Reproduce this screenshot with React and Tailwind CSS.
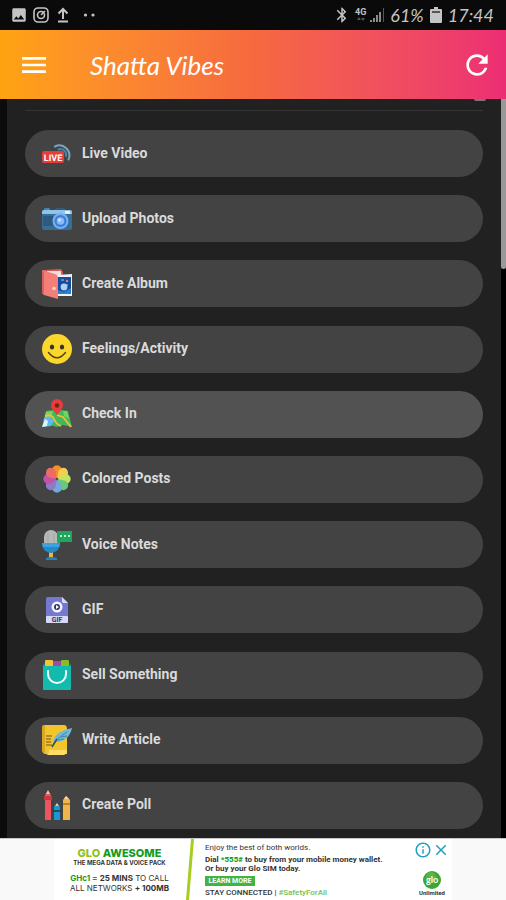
import { MdMenu, MdRefresh, MdImage, MdBluetooth, MdClose, MdInfoOutline } from "react-icons/md";

const LiveIcon = () => (
  <svg viewBox="0 0 30 30" className="size-[30px]" aria-hidden="true">
    <g fill="none" strokeLinecap="round">
      <path d="M13 7.500A10 10 0 0 1 26.500 20.500" stroke="#7ba3ba" strokeWidth="2" />
      <path d="M16.500 10.500A5.500 5.500 0 0 1 24 17" stroke="#3f86b0" strokeWidth="2" />
      <circle cx="19.500" cy="13.500" r="1.500" fill="#4aa6dc" />
    </g>
    <rect x="0" y="12" width="22" height="12" rx="2" fill="#e53f3b" />
    <text x="11" y="21.500" textAnchor="middle" textRendering="geometricPrecision" fontSize="9" fontWeight="700" fontFamily="'Roboto', sans-serif" fill="#fff">LIVE</text>
  </svg>
);

const CameraIcon = () => (
  <svg viewBox="0 0 30 30" className="size-[30px]" aria-hidden="true">
    <path d="M11 7l3-3h8l3 3z" fill="#355b78" />
    <rect x="2" y="4" width="6" height="3" rx="1" fill="#4383ad" />
    <rect x="0" y="6" width="30" height="20" rx="2" fill="#356e96" />
    <path d="M2 6h26a2 2 0 0 1 2 2v2H0V8a2 2 0 0 1 2-2z" fill="#8fc3e8" />
    <rect x="1" y="12" width="10" height="10" fill="#2e5b7d" />
    <rect x="23" y="7" width="5" height="3" fill="#e2f0fa" />
    <circle cx="18.500" cy="17" r="8" fill="#78b1f5" />
    <circle cx="18.500" cy="17" r="6" fill="#3d7fd2" />
    <circle cx="18.500" cy="17" r="3.800" fill="#87b9ff" />
    <circle cx="17.500" cy="16" r="1.500" fill="#d5e7ff" />
  </svg>
);

const AlbumIcon = () => (
  <svg viewBox="0 0 30 30" className="size-[30px]" aria-hidden="true">
    <path d="M1 1l18-1 2 3v23H4z" fill="#d65a55" />
    <path d="M5 2h14v22H5z" fill="#f3dddd" />
    <path d="M15 6l15-1v22H15z" fill="#eef3f7" />
    <path d="M16 8h13v17H16z" fill="#174c9d" />
    <circle cx="22" cy="18" r="3.400" fill="#a7d4f4" />
    <path d="M16 21l6 2 7-4v6H16z" fill="#2e7fd0" />
    <circle cx="25" cy="12" r="1.200" fill="#ee7770" />
    <path d="M19 11h3M24 16h2" stroke="#8ec8ff" strokeWidth="1" />
    <path d="M0 1l13 4q3 1 3 4v21L2 26q-2-1-2-3z" fill="#f27f78" />
    <path d="M0 1l2 2v23q-2-1-2-3z" fill="#d9605c" />
    <circle cx="12" cy="19.500" r="1.800" fill="#f7d5d2" />
  </svg>
);

const SmileIcon = () => (
  <svg viewBox="0 0 30 30" className="size-[30px]" aria-hidden="true">
    <circle cx="15" cy="15" r="15" fill="#fbd72c" />
    <ellipse cx="10" cy="13" rx="2.200" ry="2.600" fill="#3a3529" />
    <ellipse cx="20" cy="13" rx="2.200" ry="2.600" fill="#3a3529" />
    <path d="M6.500 18.500q8.500 10.500 17 0" fill="none" stroke="#4a3f22" strokeWidth="1.400" strokeLinecap="round" />
  </svg>
);

const MapIcon = () => (
  <svg viewBox="0 0 30 30" className="size-[30px]" aria-hidden="true">
    <path d="M4 12l7-1 4 2 4-2 7 1 4 16-9-2-6 2-7-2-8 2z" fill="#43b85a" />
    <path d="M4 13l7-1-2 7-7 3z" fill="#82d35c" />
    <path d="M2 19l6-2 4 5-3 5-8 1z" fill="#5eb9ed" />
    <path d="M0 28l3-8 3 2-1 5z" fill="#dff2fb" />
    <path d="M3 17q7-2 9 3t7 7M15 16l6 2 8 10" fill="none" stroke="#f2bd42" strokeWidth="1.800" />
    <path d="M21 12h4l2 8-5-3z" fill="#70d65c" />
    <path d="M15 16C11 11 9 9 9 6a6 6 0 0 1 12 0c0 3-2 5-6 10z" fill="#e83c3a" />
    <circle cx="15" cy="6.500" r="2.200" fill="#702322" />
  </svg>
);

const petals = ["#f39220", "#f7cc52", "#c5e35d", "#6bc77e", "#72a9dc", "#8f79c8", "#c252a5", "#ee6b65"];
const FlowerIcon = () => (
  <svg viewBox="0 0 30 30" className="size-[30px]" aria-hidden="true">
    {petals.map((color, i) => (
      <path key={color} d="M15 15L10.300 8A5 5 0 1 1 19.700 8z" fill={color} transform={`rotate(${i * 45} 15 15)`} />
    ))}
    <circle cx="15" cy="15" r="1.300" fill="#5d4a3d" />
  </svg>
);

const MicIcon = () => (
  <svg viewBox="0 0 30 30" className="size-[30px]" aria-hidden="true">
    <path d="M7 22h4v6H7z" fill="#e5b73f" />
    <path d="M4 28q5-2 11 0v2H4z" fill="#2383ba" />
    <path d="M0 13h18v1a9 9 0 0 1-18 0z" fill="#2588c8" />
    <path d="M2 14V7a7 7 0 0 1 14 0v7z" fill="#b5b9b8" />
    <path d="M6 3v11M12 3v11" stroke="#a0a6a5" strokeWidth="1" />
    <path d="M0 13h18l-1 4H1z" fill="#3ba1df" />
    <path d="M16 1h14v11H19l-3 2-1-2V2z" fill="#20a65c" />
    <path d="M18 6h2m2 0h2m2 0h2" stroke="#fff" strokeWidth="1.600" />
  </svg>
);

const GifIcon = () => (
  <svg viewBox="0 0 30 30" className="size-[30px]" aria-hidden="true">
    <path d="M6 2h14l6 6v20H6a2 2 0 0 1-2-2V4a2 2 0 0 1 2-2z" fill="#7578d0" />
    <path d="M20 2l6 6h-5l-1-1z" fill="#d9d9fa" />
    <circle cx="15" cy="12" r="5.500" fill="#f5f5ff" />
    <circle cx="15" cy="12" r="3" fill="#323478" />
    <path d="M14 10l3 2-3 2z" fill="#fff" />
    <rect x="4" y="21" width="22" height="7" rx="1" fill="#d9d9f7" />
    <text x="15" y="27" textAnchor="middle" textRendering="geometricPrecision" fontSize="7" fontWeight="700" fontFamily="'Roboto', sans-serif" fill="#33354f">GIF</text>
  </svg>
);

const BagIcon = () => (
  <svg viewBox="0 0 30 30" className="size-[30px]" aria-hidden="true">
    <path d="M1 5l3-3h22l3 3z" fill="#16897f" />
    <rect x="3" y="0" width="8" height="8" rx="1" fill="#f2c43e" />
    <rect x="11" y="1" width="8" height="7" fill="#a346b0" />
    <rect x="19" y="0" width="8" height="8" rx="1" fill="#85bd22" />
    <path d="M1 5l2 1h24l2-1v24q0 1-1 1H2q-1 0-1-1z" fill="#13bbae" />
    <path d="M6 11v3a9 9 0 0 0 18 0v-3" fill="none" stroke="#f0fffc" strokeWidth="2" strokeLinecap="round" />
  </svg>
);

const ScrollIcon = () => (
  <svg viewBox="0 0 30 30" className="size-[30px]" aria-hidden="true">
    <path d="M3 0h19q3 0 3 4v25H4q-4 0-4-5V3q0-3 3-3z" fill="#f2c52d" />
    <path d="M0 3q0-3 3-3v28q-3-1-3-4z" fill="#dba620" />
    <path d="M7 25h18q0 4-3 5H4q4-1 3-5z" fill="#ffdc68" />
    <path d="M4 11h6M4 14h5M4 17h5M4 20h6" stroke="#6b5520" strokeWidth="1.200" />
    <path d="M11 20C11 11 16 6 30 3c-2 9-8 14-16 14z" fill="#6fb8da" />
    <path d="M14 15L25 7M16 15l6-1M19 12l6-1" fill="none" stroke="#387b9e" strokeWidth="0.800" />
    <path d="M10 22l5-8" stroke="#344e5a" strokeWidth="1.500" />
  </svg>
);

const PollIcon = () => (
  <svg viewBox="0 0 30 30" className="size-[30px]" aria-hidden="true">
    <path d="M3 5l3-4 3 4v25H3z" fill="#ec5560" />
    <path d="M4 4l2-4 2 4z" fill="#f3c4a4" />
    <path d="M2 6h8v4H2z" fill="#c73843" />
    <path d="M12 17l3-4 3 4v13h-6z" fill="#1698d2" />
    <path d="M13 16l2-3 2 3z" fill="#f1c39e" />
    <path d="M11 21h8" stroke="#333" strokeWidth="1.500" />
    <path d="M21 10l3-4 4 4v20h-7z" fill="#efb64b" />
    <path d="M22 9l2-3 3 3z" fill="#f5d3ad" />
    <path d="M21 14h7" stroke="#a4702c" strokeWidth="1.500" />
  </svg>
);

const actions = [
  ["Live Video", LiveIcon],
  ["Upload Photos", CameraIcon],
  ["Create Album", AlbumIcon],
  ["Feelings/Activity", SmileIcon],
  ["Check In", MapIcon],
  ["Colored Posts", FlowerIcon],
  ["Voice Notes", MicIcon],
  ["GIF", GifIcon],
  ["Sell Something", BagIcon],
  ["Write Article", ScrollIcon],
  ["Create Poll", PollIcon],
];

function StatusBar() {
  return (
    <div className="flex h-[30px] shrink-0 items-center justify-between bg-[#0a0a0a] pr-3 pl-2.5 text-[#c4c4c4]">
      <div className="flex items-center gap-1">
        <MdImage className="size-[18px]" />
        <svg viewBox="0 0 18 18" className="size-[18px]" fill="none" stroke="currentColor" strokeWidth="1.600">
          <rect x="2" y="2" width="14" height="14" rx="4" />
          <circle cx="9" cy="9" r="3.500" />
          <path d="M9 9l4-4" />
        </svg>
        <svg viewBox="0 0 18 18" className="size-[18px]" fill="none" stroke="currentColor" strokeWidth="2">
          <path d="M9 13V3M4.500 7.500L9 3l4.500 4.500M4 15.500h10" />
        </svg>
        <svg viewBox="0 0 24 18" className="h-[18px] w-6" fill="currentColor">
          <circle cx="9.500" cy="9" r="1.600" />
          <circle cx="17" cy="9" r="1.600" />
        </svg>
      </div>
      <div className="flex items-center">
        <MdBluetooth className="mr-1 size-[18px]" />
        <div className="flex flex-col items-center">
          <span className="font-['Roboto',sans-serif] text-[9px] leading-[9px] font-bold">4G</span>
          <svg viewBox="0 0 10 5" className="h-[5px] w-2.5 fill-[#555]"><path d="M1 3l2-3 2 3zM5 1h4L7 4z" /></svg>
        </div>
        <svg viewBox="0 0 16 16" className="ml-1 size-4" fill="#8b8b8b">
          <path d="M0 13h2v2H0zM3 11h2v4H3zM6 8h2v7H6zM9 5h2v10H9z" />
          <path d="M13 1h1v14h-1z" fill="#555" />
        </svg>
        <span className="ml-1 font-['Lato',sans-serif] text-[18px] leading-5 italic">61%</span>
        <svg viewBox="0 0 12 16" className="mx-1.5 h-4 w-3" fill="currentColor">
          <path d="M4 0h4v2h3q1 0 1 1v12q0 1-1 1H1q-1 0-1-1V3q0-1 1-1h3z" />
          <path d="M2 4h8v2H2z" fill="#555" />
        </svg>
        <span className="font-['Lato',sans-serif] text-[18px] leading-5 italic">17:44</span>
      </div>
    </div>
  );
}

function AdBanner() {
  return (
    <aside className="flex h-[62px] shrink-0 justify-center border-t border-[#c9c9c9] bg-[#f9f9f9] font-['Roboto',sans-serif] text-[#333]">
      <div className="flex w-[398px] bg-white">
        <div className="flex w-[131px] flex-col items-center pt-2 font-['Inter',sans-serif] whitespace-nowrap">
          <p className="text-[11px] leading-3 font-extrabold text-[#159a22]"><span className="text-[#8fc31c]">GLO</span> AWESOME</p>
          <p className="text-[6px] leading-[8px] font-bold">THE MEGA DATA &amp; VOICE PACK</p>
          <p className="mt-1.5 text-[8px] leading-[10px]"><b className="text-[#159a22]">GHc1 =</b> <b>25 MINS</b> TO CALL</p>
          <p className="text-[8px] leading-[10px]">ALL NETWORKS <b>+ 100MB</b></p>
        </div>
        <svg viewBox="0 0 10 61" preserveAspectRatio="none" className="h-full w-2.5"><path d="M6 0h3L4 61H1z" fill="#a8cc20" /></svg>
        <div className="flex flex-1 flex-col items-start pt-1 pl-2.5 whitespace-nowrap">
          <p className="text-[8px] leading-[10px]">Enjoy the best of both worlds.</p>
          <p className="mt-0.5 text-[8px] leading-[9px] font-bold">Dial <b className="text-[#20a52a]">*555#</b> to buy from your mobile money wallet.</p>
          <p className="text-[8px] leading-[10px] font-bold">Or buy your Glo SIM today.</p>
          <button className="mt-0.5 h-2.5 w-[50px] bg-[#43b342] text-[7px] leading-[10px] font-bold text-white">LEARN MORE</button>
          <p className="mt-0.5 text-[8px] leading-[10px] font-medium">STAY CONNECTED | <span className="text-[#72be50]">#SafetyForAll</span></p>
        </div>
        <div className="flex w-10 flex-col items-center">
          <div className="flex pt-0.5 text-[#219fc5]">
            <button aria-label="Ad information"><MdInfoOutline className="size-[18px]" /></button>
            <button aria-label="Close ad"><MdClose className="size-[18px]" /></button>
          </div>
          <svg viewBox="0 0 18 18" className="mt-3 size-[18px]">
            <circle cx="9" cy="9" r="9" fill="#3da635" />
            <circle cx="8" cy="6" r="5" fill="#72c45b" opacity="0.5" />
            <text x="9" y="12" textAnchor="middle" fontSize="9" fontWeight="700" fontFamily="'Lato', sans-serif" fill="#fff">glo</text>
          </svg>
          <span className="text-[6px] leading-[8px] font-bold">Unlimited</span>
        </div>
      </div>
    </aside>
  );
}

export default function App() {
  return (
    <div className="flex h-screen min-h-[820px] flex-col overflow-hidden bg-[#0b0b0b]">
      <StatusBar />
      <header className="flex h-[69px] shrink-0 items-center bg-linear-to-r from-[#ffa30f] via-[#f6693f] to-[#ec2d73] pr-[13px] pl-[18px] text-white">
        <button aria-label="Menu"><MdMenu className="size-8" /></button>
        <h1 className="ml-10 flex-1 font-['Lato',sans-serif] text-[26px] leading-8 italic">Shatta Vibes</h1>
        <button aria-label="Refresh"><MdRefresh className="size-8" /></button>
      </header>
      <div className="flex min-h-0 flex-1">
        <main className="ml-[7px] flex flex-1 flex-col bg-[#212121] px-[18px] pb-[9px]">
          <div className="flex h-3 shrink-0 justify-end border-b border-[#353535]">
            <span className="mr-[-3px] h-0.5 w-3 rounded-b-full bg-[#777]" />
          </div>
          <ul className="mt-[19px] flex flex-1 flex-col justify-between">
            {actions.map(([label, Icon]) => (
              <li key={label}>
                <button
                  className={`flex h-[47px] w-full items-center gap-[10px] rounded-full pl-[17px] text-left font-['Roboto',sans-serif] text-[14px] leading-5 font-bold text-[#dadada] ${label === "Check In" ? "bg-[#525252]" : "bg-[#434343]"}`}
                >
                  <Icon />
                  <span className="pb-0.5">{label}</span>
                </button>
              </li>
            ))}
          </ul>
        </main>
        <div className="w-[5px] bg-black">
          <div className="h-[23%] rounded-b-full bg-[#999]" />
        </div>
      </div>
      <AdBanner />
    </div>
  );
}
